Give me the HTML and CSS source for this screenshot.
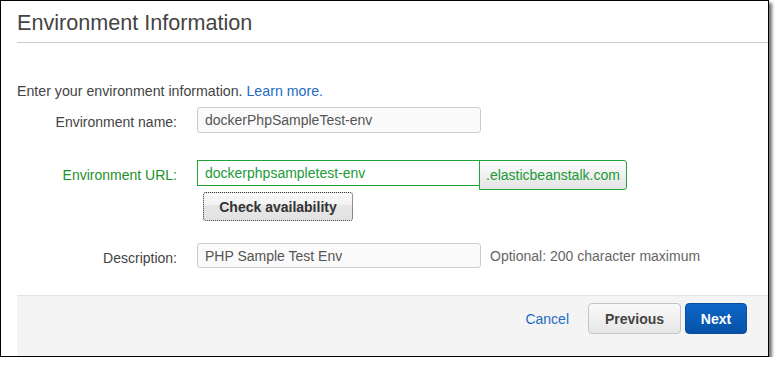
FILE: index.html
```html
<!doctype html>
<html lang="en">

<head>
    <meta charset="UTF-8">
    <title>Environment Information</title>
    <link rel="stylesheet" href="styles.css">
</head>

<body>
    <div class="frame">
        <div class="header">
            <h1>Environment Information</h1>
        </div>
        <div class="content">
            <p class="intro">Enter your environment information. <a href="#">Learn more.</a></p>

            <div class="row row-name">
                <label class="label" for="envName">Environment name:</label>
                <input class="field" type="text" id="envName" value="dockerPhpSampleTest-env">
            </div>

            <div class="row row-url valid">
                <label class="label" for="envUrl">Environment URL:</label>
                <div class="url-group">
                    <div class="url-line">
                        <input class="field" type="text" id="envUrl" value="dockerphpsampletest-env">
                        <span class="addon">.elasticbeanstalk.com</span>
                    </div>
                    <button class="btn btn-check" type="button">Check availability</button>
                </div>
            </div>

            <div class="row row-desc">
                <label class="label" for="envDesc">Description:</label>
                <input class="field" type="text" id="envDesc" value="PHP Sample Test Env">
                <span class="hint">Optional: 200 character maximum</span>
            </div>
        </div>
        <div class="footer">
            <a class="cancel" href="#">Cancel</a>
            <button class="btn btn-prev" type="button">Previous</button>
            <button class="btn btn-next" type="button">Next</button>
        </div>
    </div>
</body>

</html>
```

FILE: styles.css
```css
body {
    margin: 0;
    padding: 0;
    background-color: #fff;
    font-family: 'Liberation Sans', Arial, sans-serif;
    color: #444;
}

.frame {
    width: 767px;
    height: 355px;
    border: 1px solid #000;
    background-color: #fff;
    box-shadow: 3px 3px 3px rgba(0, 0, 0, 0.55);
    display: flex;
    flex-direction: column;
}

.header {
    margin-left: 16px;
    height: 41px;
    border-bottom: 1px solid #ccc;
}

.header h1 {
    margin: 0;
    padding-top: 9px;
    font-size: 21.6px;
    font-weight: normal;
    line-height: 26px;
    color: #444;
}

.content {
    flex: 1;
    padding-left: 16px;
}

.intro {
    margin: 39px 0 0 0;
    font-size: 14.2px;
    line-height: 18px;
}

.intro a,
.cancel {
    color: #1e6bc3;
    text-decoration: none;
}

.row {
    display: flex;
    align-items: flex-start;
    font-size: 14px;
}

.row-name {
    margin-top: 7px;
}

.row-url {
    margin-top: 27px;
}

.row-desc {
    margin-top: 22px;
}

.label {
    width: 160px;
    flex-shrink: 0;
    text-align: right;
    padding-top: 7px;
    margin-right: 20px;
    line-height: 16px;
}

.field {
    box-sizing: border-box;
    width: 284px;
    height: 26px;
    padding: 0 7px;
    border: 1px solid #ccc;
    border-radius: 3px;
    background-color: #fafafa;
    font-family: inherit;
    font-size: 14px;
    color: #555;
}

.row-desc .field {
    height: 25px;
}

.valid .label {
    color: #22902a;
}

.url-line {
    display: flex;
    align-items: flex-start;
}

.valid .field {
    width: 283px;
    border-color: #22a33a;
    border-radius: 0;
    background-color: #fff;
    color: #1b9a36;
}

.addon {
    box-sizing: border-box;
    height: 30px;
    padding: 0 6px;
    margin-left: -1px;
    border: 1px solid #22a33a;
    border-radius: 0 3px 3px 0;
    background: linear-gradient(#fdfdfd, #e4e4e4);
    line-height: 28px;
    color: #1b9a36;
}

.btn {
    font-family: inherit;
    font-weight: bold;
    cursor: pointer;
}

.btn-check {
    display: block;
    box-sizing: border-box;
    width: 150px;
    height: 29px;
    margin: 2px 0 0 6px;
    border: 1px dotted #333;
    border-radius: 3px;
    background: linear-gradient(#f9f9f9 0%, #f2f2f2 45%, #e6e6e6 46%, #e2e2e2 100%);
    font-size: 14px;
    color: #333;
}

.hint {
    margin-left: 9px;
    padding-top: 5px;
    line-height: 16px;
    color: #666;
}

.footer {
    height: 60px;
    margin-left: 16px;
    border-top: 1px solid #e4e4e4;
    background-color: #f4f4f4;
    display: flex;
    align-items: flex-start;
    justify-content: flex-end;
    padding-right: 21px;
}

.cancel {
    margin-top: 15px;
    margin-right: 19px;
    font-size: 14px;
}

.btn-prev,
.btn-next {
    box-sizing: border-box;
    height: 31px;
    margin-top: 7px;
    border-radius: 4px;
    font-size: 14px;
}

.btn-prev {
    width: 93px;
    margin-right: 4px;
    border: 1px solid #c4c4c4;
    background: linear-gradient(#fafafa, #e6e6e6);
    color: #444;
}

.btn-next {
    width: 62px;
    border: 1px solid #0a4f9e;
    background: linear-gradient(#0d66c6, #0552a8);
    color: #fff;
}
```
